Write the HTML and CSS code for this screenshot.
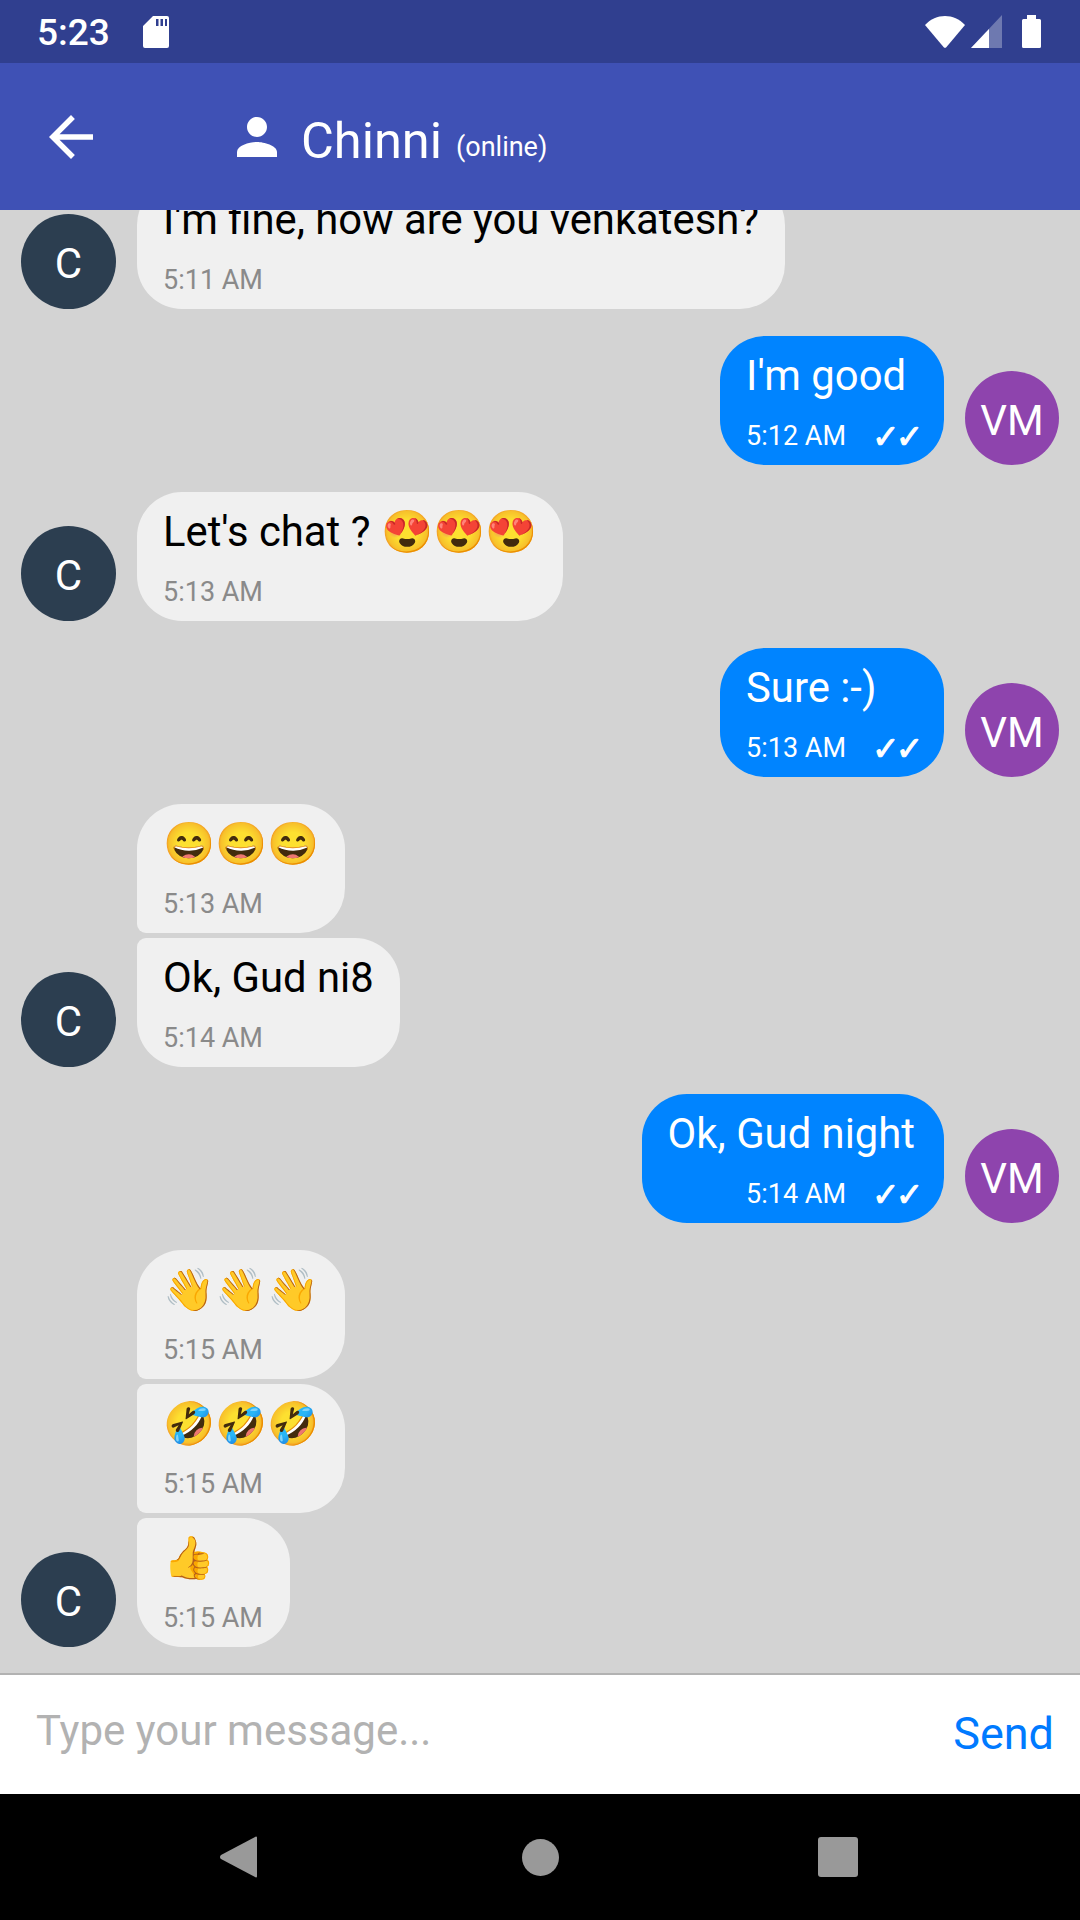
FILE: index.html
```html
<!DOCTYPE html>
<html lang="en">
<head>
<meta charset="utf-8">
<title>Chinni chat</title>
<link rel="stylesheet" href="styles.css">
</head>
<body>
<div class="app">
  <div class="status">
    <div class="status-left">
      <span class="clock">5:23</span>
      <svg class="sd" viewBox="0 0 26 32"><path fill-rule="evenodd" d="M10 0H24a2 2 0 0 1 2 2V30a2 2 0 0 1-2 2H2a2 2 0 0 1-2-2V10ZM13 3V10H15.500V3ZM17.500 3V10H20V3ZM22 3V10H24V3Z" fill="#fff"/></svg>
    </div>
    <div class="status-right">
      <svg class="wifi" viewBox="0 0 40 32"><path d="M0 9C11-3 29-3 40 9L21.500 31a2 2 0 0 1-3 0Z" fill="#fff"/></svg>
      <svg class="signal" viewBox="0 0 31 33"><path d="M31 0V33H0Z" fill="#fff" opacity=".3"/><path d="M18 14V33H0Z" fill="#fff"/></svg>
      <svg class="battery" viewBox="0 0 19 33"><path d="M5 0H14V4H17.500a1.500 1.500 0 0 1 1.500 1.500V31.500a1.500 1.500 0 0 1-1.500 1.500H1.500a1.500 1.500 0 0 1-1.500-1.500V5.500A1.500 1.500 0 0 1 1.500 4H5Z" fill="#fff"/></svg>
    </div>
  </div>
  <header class="header">
    <svg class="back" viewBox="0 0 24 24"><path d="M20 11H7.830l5.590-5.590L12 4l-8 8 8 8 1.410-1.410L7.830 13H20z" fill="#fff"/></svg>
    <svg class="person" viewBox="0 0 24 24"><path d="M12 12c2.210 0 4-1.790 4-4s-1.790-4-4-4-4 1.790-4 4 1.790 4 4 4zm0 2c-2.670 0-8 1.340-8 4v2h16v-2c0-2.660-5.330-4-8-4z" fill="#fff"/></svg>
    <span class="title">Chinni</span>
    <span class="presence">(online)</span>
  </header>
  <main class="messages">
    <div class="row in"><div class="avatar dark">C</div><div class="bubble"><div class="text">I'm fine, how are you venkatesh?</div><div class="meta"><span class="time">5:11 AM</span></div></div></div>
    <div class="row out"><div class="bubble"><div class="text">I'm good</div><div class="meta"><span class="time">5:12 AM</span><span class="ticks">✓✓</span></div></div><div class="avatar purple">VM</div></div>
    <div class="row in"><div class="avatar dark">C</div><div class="bubble"><div class="text">Let's chat ? 😍😍😍</div><div class="meta"><span class="time">5:13 AM</span></div></div></div>
    <div class="row out"><div class="bubble"><div class="text">Sure :-)</div><div class="meta"><span class="time">5:13 AM</span><span class="ticks">✓✓</span></div></div><div class="avatar purple">VM</div></div>
    <div class="row in"><div class="avatar hidden"></div><div class="bubble first"><div class="text">😄😄😄</div><div class="meta"><span class="time">5:13 AM</span></div></div></div>
    <div class="row in tight"><div class="avatar dark">C</div><div class="bubble last"><div class="text">Ok, Gud ni8</div><div class="meta"><span class="time">5:14 AM</span></div></div></div>
    <div class="row out"><div class="bubble"><div class="text">Ok, Gud night</div><div class="meta"><span class="time">5:14 AM</span><span class="ticks">✓✓</span></div></div><div class="avatar purple">VM</div></div>
    <div class="row in"><div class="avatar hidden"></div><div class="bubble first"><div class="text">👋👋👋</div><div class="meta"><span class="time">5:15 AM</span></div></div></div>
    <div class="row in tight"><div class="avatar hidden"></div><div class="bubble middle"><div class="text">🤣🤣🤣</div><div class="meta"><span class="time">5:15 AM</span></div></div></div>
    <div class="row in tight"><div class="avatar dark">C</div><div class="bubble last"><div class="text">👍</div><div class="meta"><span class="time">5:15 AM</span></div></div></div>
  </main>
  <div class="composer">
    <span class="placeholder">Type your message...</span>
    <span class="send">Send</span>
  </div>
  <nav class="navbar">
    <svg class="nav-back" viewBox="0 0 37 42"><path d="M36 0.500a1 1 0 0 1 1 1V40.500a1 1 0 0 1-1 1L1 23a2.500 2.500 0 0 1 0-4Z" fill="#999"/></svg>
    <svg class="nav-home" viewBox="0 0 37 37"><circle cx="18.500" cy="18.500" r="18.500" fill="#999"/></svg>
    <svg class="nav-recent" viewBox="0 0 40 40"><rect width="40" height="40" rx="3" fill="#999"/></svg>
  </nav>
</div>
</body>
</html>
```
FILE: styles.css
```css
* { box-sizing: border-box; }
html, body { margin: 0; padding: 0; }
body { font-family: Roboto, "Noto Sans", sans-serif; }
.app { width: 1080px; height: 1920px; display: flex; flex-direction: column; background: #d3d3d3; overflow: hidden; }

.status { height: 63px; flex: none; background: #303f8f; display: flex; justify-content: space-between; align-items: center; padding: 0 39px 0 37px; color: #fff; }
.status-left { display: flex; align-items: center; gap: 33px; }
.clock { font-size: 37px; font-weight: 500; line-height: 63px; padding-top: 1px; }
.sd { width: 26px; height: 32px; }
.status-right { display: flex; align-items: center; }
.wifi { width: 40px; height: 32px; margin-right: 6px; }
.signal { width: 31px; height: 33px; margin-right: 20px; }
.battery { width: 19px; height: 33px; }

.header { height: 147px; flex: none; background: #3f51b5; display: flex; align-items: center; color: #fff; padding-left: 38px; position: relative; z-index: 1; }
.back { width: 66px; height: 66px; margin-right: 123px; }
.person { width: 60px; height: 60px; margin-right: 14px; }
.title { font-size: 50.500px; margin-right: 14px; margin-top: 8px; }
.presence { font-size: 27px; margin-top: 21px; }

.messages { flex: 1; min-height: 0; display: flex; flex-direction: column; justify-content: flex-end; padding-bottom: 26px; overflow: hidden; }
.row { display: flex; align-items: flex-end; flex: none; margin-top: 27px; padding: 0 21px; gap: 21px; }
.row.tight { margin-top: 5px; }
.row.out { justify-content: flex-end; }
.avatar { width: 95px; height: 95px; padding-top: 4px; border-radius: 50%; flex: none; display: flex; align-items: center; justify-content: center; color: #fff; font-size: 42px; }
.out .avatar { width: 94px; height: 94px; }
.avatar.dark { background: #2c3e50; }
.avatar.purple { background: #8e44ad; }
.avatar.hidden { visibility: hidden; }

.bubble { border-radius: 45px; background: #f0f0f0; color: #000; }
.out .bubble { background: #0084ff; color: #fff; }
.bubble.first { border-bottom-left-radius: 9px; }
.bubble.middle { border-top-left-radius: 9px; border-bottom-left-radius: 9px; }
.bubble.last { border-top-left-radius: 9px; }
.text { font-size: 41.800px; line-height: 60px; margin: 10px 26px 18px; white-space: nowrap; }
.out .text { margin-right: 29px; }
.meta { display: flex; justify-content: flex-end; align-items: center; height: 24px; margin-bottom: 17px; padding-right: 24px; }
.in .meta { justify-content: flex-start; padding: 0 27px 0 26px; }
.time { font-size: 27px; color: #8a8a8a; margin-left: 26px; }
.in .time { margin-left: 0; }
.out .time { color: #fff; }
.ticks { font-family: "DejaVu Sans", sans-serif; font-size: 33px; letter-spacing: -4px; -webkit-text-stroke: 1px #fff; margin-left: 26px; color: #fff; width: 48px; white-space: nowrap; }

.composer { height: 121px; flex: none; background: #fff; border-top: 2px solid #b2b2b2; display: flex; justify-content: space-between; align-items: center; padding: 0 26px 0 36px; }
.placeholder { font-size: 42px; color: #b2b2b2; margin-bottom: 8px; }
.send { font-size: 45px; color: #007aff; margin-bottom: 2px; }

.navbar { height: 126px; flex: none; background: #000; position: relative; display: flex; align-items: center; padding-left: 220px; }
.nav-back { width: 37px; height: 42px; margin-right: 265px; }
.nav-home { width: 37px; height: 37px; margin-right: 259px; }
.nav-recent { width: 40px; height: 40px; }
```
